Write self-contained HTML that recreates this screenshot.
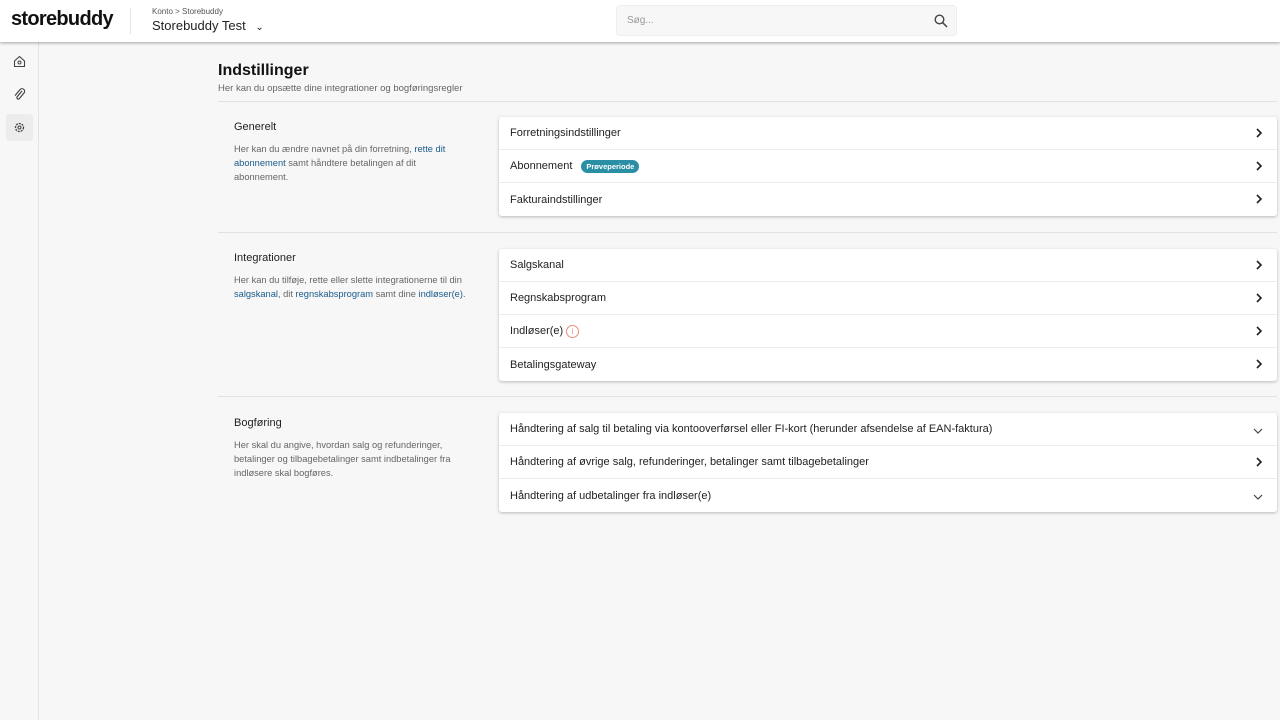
<!DOCTYPE html>
<html><head><meta charset="utf-8"><style>
*{box-sizing:border-box;margin:0;padding:0}
body{width:1280px;height:720px;background:#f7f7f7;font-family:"Liberation Sans",sans-serif;color:#222;position:relative;overflow:hidden}
.hdr{position:absolute;left:0;top:0;width:1280px;height:42px;background:#fff;box-shadow:0 1px 3px rgba(0,0,0,.35);z-index:2}
.logo{position:absolute;left:11px;top:8px;font-size:20px;font-weight:bold;letter-spacing:-0.7px;color:#111}
.vs{position:absolute;left:130px;top:8px;width:1px;height:26px;background:#e5e5e5}
.bc{position:absolute;left:152px;top:7px;font-size:8px;color:#555}
.acct{position:absolute;left:152px;top:18px;font-size:13px;color:#222}
.search{position:absolute;left:616px;top:5px;width:341px;height:31px;background:#f7f7f7;border:1px solid #eee;border-radius:4px;font-size:10px;color:#999;padding:9px 10px}
.side{position:absolute;left:0;top:42px;width:39px;height:678px;border-right:1px solid #e3e3e3;background:#f7f7f7}
.si{position:absolute;left:6px;width:27px;height:27px;border-radius:3px}
h1{position:absolute;left:218px;top:62px;font-size:16px;font-weight:bold;color:#111}
.sub{position:absolute;left:218px;top:83px;font-size:9.5px;color:#666}
.hr{position:absolute;left:218px;width:1059px;height:1px;background:#e2e2e2}
.lab{position:absolute;left:234px;font-size:11px;color:#222}
.desc{position:absolute;left:234px;width:232px;font-size:9.3px;line-height:14px;color:#666}
.desc a{color:#1a5b8c;text-decoration:none}
.card{position:absolute;left:499px;width:778px;background:#fff;border-radius:3px;box-shadow:0 1px 3px rgba(0,0,0,.25)}
.row{height:33px;border-bottom:1px solid #ececec;font-size:11px;padding:0 11px;display:flex;align-items:center;position:relative}
.row:last-child{border-bottom:none}
.row svg{position:absolute;right:14px;top:11px}
.badge{margin-left:9px;background:#2a8ea4;color:#fff;font-size:7.5px;font-weight:bold;padding:2px 5px;border-radius:7px}
</style></head><body>
<div class="hdr">
<div class="logo">storebuddy</div><div class="vs"></div>
<div class="bc">Konto &gt; Storebuddy</div>
<div class="acct">Storebuddy Test <span style="font-size:10px;margin-left:6px">⌄</span></div>
<div class="search">Søg...
<svg style="position:absolute;right:8px;top:8px" width="14" height="14" viewBox="0 0 14 14"><circle cx="5.5" cy="5.5" r="4.3" fill="none" stroke="#444" stroke-width="1.4"/><path d="M8.7 8.7L13 13" stroke="#444" stroke-width="1.5"/></svg></div>
</div>
<div class="side">
<div class="si" style="top:6px"><svg width="27" height="27" viewBox="0 0 27 27"><path d="M8.5 13L13.5 8.5 18.5 13V18.5H8.5Z" fill="none" stroke="#444" stroke-width="1.1"/><circle cx="13.5" cy="14.5" r="1.5" fill="none" stroke="#444"/></svg></div>
<div class="si" style="top:40px"><svg width="27" height="27" viewBox="0 0 27 27"><path d="M16 9L11 15a1.5 1.5 0 002 2l5-6a2.6 2.6 0 00-4-3.4l-5 6" fill="none" stroke="#444" stroke-width="1.2"/></svg></div>
<div class="si" style="top:72px;background:#ececec"><svg width="27" height="27" viewBox="0 0 27 27"><circle cx="13.5" cy="13.5" r="4" fill="none" stroke="#444" stroke-width="1.3" stroke-dasharray="2 1"/><circle cx="13.5" cy="13.5" r="1.5" fill="none" stroke="#444"/></svg></div>
</div>
<h1>Indstillinger</h1>
<div class="sub">Her kan du opsætte dine integrationer og bogføringsregler</div>
<div class="hr" style="top:101px"></div>
<div class="lab" style="top:121px">Generelt</div>
<div class="desc" style="top:142px">Her kan du ændre navnet på din forretning, <a>rette dit abonnement</a> samt håndtere betalingen af dit abonnement.</div>
<div class="card" style="top:117px">
<div class="row">Forretningsindstillinger<svg width="8" height="10" viewBox="0 0 8 10"><path d="M2 1l4 4-4 4" fill="none" stroke="#222" stroke-width="1.6"/></svg></div>
<div class="row">Abonnement <span class="badge">Prøveperiode</span><svg width="8" height="10" viewBox="0 0 8 10"><path d="M2 1l4 4-4 4" fill="none" stroke="#222" stroke-width="1.6"/></svg></div>
<div class="row">Fakturaindstillinger<svg width="8" height="10" viewBox="0 0 8 10"><path d="M2 1l4 4-4 4" fill="none" stroke="#222" stroke-width="1.6"/></svg></div>
</div>
<div class="hr" style="top:232px"></div>
<div class="lab" style="top:252px">Integrationer</div>
<div class="desc" style="top:273px">Her kan du tilføje, rette eller slette integrationerne til din <a>salgskanal</a>, dit <a>regnskabsprogram</a> samt dine <a>indløser(e)</a>.</div>
<div class="card" style="top:249px">
<div class="row">Salgskanal<svg width="8" height="10" viewBox="0 0 8 10"><path d="M2 1l4 4-4 4" fill="none" stroke="#222" stroke-width="1.6"/></svg></div>
<div class="row">Regnskabsprogram<svg width="8" height="10" viewBox="0 0 8 10"><path d="M2 1l4 4-4 4" fill="none" stroke="#222" stroke-width="1.6"/></svg></div>
<div class="row">Indløser(e)<span style="display:inline-block;margin-left:3px;width:13px;height:13px;border:1px solid #e8907a;border-radius:50%;color:#e8907a;font-size:8px;text-align:center;line-height:11px">i</span><svg width="8" height="10" viewBox="0 0 8 10"><path d="M2 1l4 4-4 4" fill="none" stroke="#222" stroke-width="1.6"/></svg></div>
<div class="row">Betalingsgateway<svg width="8" height="10" viewBox="0 0 8 10"><path d="M2 1l4 4-4 4" fill="none" stroke="#222" stroke-width="1.6"/></svg></div>
</div>
<div class="hr" style="top:396px"></div>
<div class="lab" style="top:417px">Bogføring</div>
<div class="desc" style="top:438px">Her skal du angive, hvordan salg og refunderinger, betalinger og tilbagebetalinger samt indbetalinger fra indløsere skal bogføres.</div>
<div class="card" style="top:413px">
<div class="row">Håndtering af salg til betaling via kontooverførsel eller FI-kort (herunder afsendelse af EAN-faktura)<svg width="10" height="10" viewBox="0 0 10 10" style="top:13px"><path d="M1 3l4 4 4-4" fill="none" stroke="#444" stroke-width="1.2"/></svg></div>
<div class="row">Håndtering af øvrige salg, refunderinger, betalinger samt tilbagebetalinger<svg width="8" height="10" viewBox="0 0 8 10"><path d="M2 1l4 4-4 4" fill="none" stroke="#222" stroke-width="1.6"/></svg></div>
<div class="row">Håndtering af udbetalinger fra indløser(e)<svg width="10" height="10" viewBox="0 0 10 10" style="top:13px"><path d="M1 3l4 4 4-4" fill="none" stroke="#444" stroke-width="1.2"/></svg></div>
</div>
</body></html>
